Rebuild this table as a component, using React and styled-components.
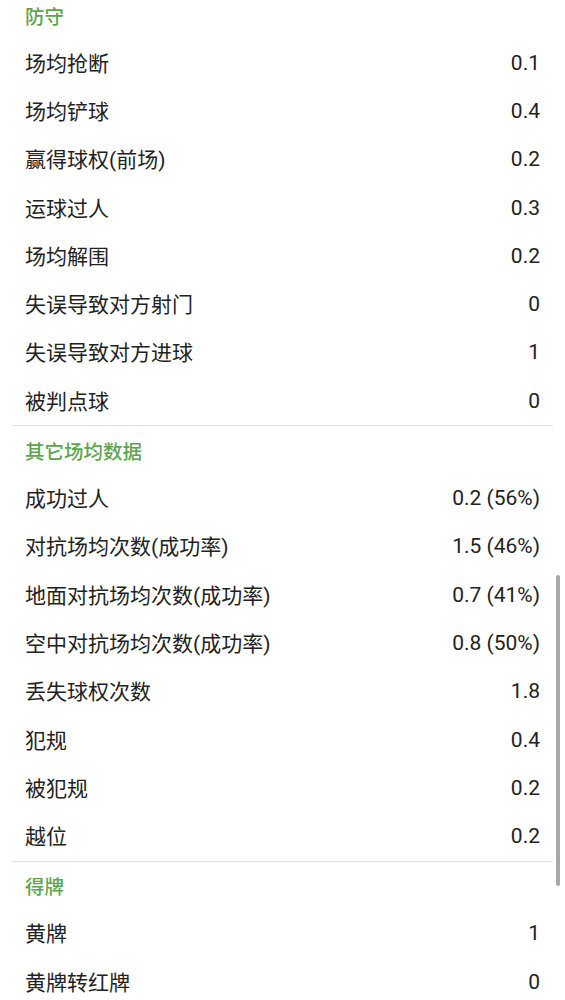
import React from "react";
import styled, { createGlobalStyle } from "styled-components";

const GlobalStyle = createGlobalStyle`
  html, body {
    margin: 0;
    padding: 0;
    background: #ffffff;
    overflow: hidden;
  }
  body {
    font-family: Roboto, "Noto Sans CJK SC", sans-serif;
    -webkit-font-smoothing: antialiased;
  }
`;

const sections = [
  {
    title: "防守",
    rows: [
      ["场均抢断", "0.1"],
      ["场均铲球", "0.4"],
      ["赢得球权(前场)", "0.2"],
      ["运球过人", "0.3"],
      ["场均解围", "0.2"],
      ["失误导致对方射门", "0"],
      ["失误导致对方进球", "1"],
      ["被判点球", "0"],
    ],
  },
  {
    title: "其它场均数据",
    rows: [
      ["成功过人", "0.2 (56%)"],
      ["对抗场均次数(成功率)", "1.5 (46%)"],
      ["地面对抗场均次数(成功率)", "0.7 (41%)"],
      ["空中对抗场均次数(成功率)", "0.8 (50%)"],
      ["丢失球权次数", "1.8"],
      ["犯规", "0.4"],
      ["被犯规", "0.2"],
      ["越位", "0.2"],
    ],
  },
  {
    title: "得牌",
    rows: [
      ["黄牌", "1"],
      ["黄牌转红牌", "0"],
    ],
  },
];

const App = () => {
  return (
    <>
      <GlobalStyle />
      <Page>
        {sections.map((section, i) => (
          <Section key={section.title} $last={i === sections.length - 1}>
            <SectionTitle>{section.title}</SectionTitle>
            {section.rows.map(([label, value]) => (
              <Row key={label}>
                <Label>{label}</Label>
                <Value>{value}</Value>
              </Row>
            ))}
          </Section>
        ))}
      </Page>
      <ScrollThumb />
    </>
  );
};

export default App;

const Page = styled.div`
  margin-top: -9px;
  padding: 0 12px;
`;

const Section = styled.section`
  border-bottom: ${(p) => (p.$last ? "none" : "1px solid #e3e3e3")};
`;

const SectionTitle = styled.h3`
  margin: 0;
  height: 48px;
  display: flex;
  align-items: center;
  padding: 0 13px;
  font-family: Roboto, "Noto Sans CJK SC", sans-serif;
  font-size: 19.5px;
  font-weight: 500;
  color: #5ea44e;
`;

const Row = styled.div`
  height: 48.3px;
  display: flex;
  align-items: center;
  justify-content: space-between;
  padding: 0 13px;
`;

const Label = styled.span`
  font-family: Roboto, "Noto Sans CJK SC", sans-serif;
  font-size: 21px;
  line-height: 1;
  color: #222222;
  margin-top: 2px;
`;

const Value = styled.span`
  font-size: 21px;
  line-height: 1;
  color: #222222;
`;

const ScrollThumb = styled.div`
  position: fixed;
  left: 556px;
  top: 575px;
  width: 4px;
  height: 311px;
  border-radius: 2px;
  background: #a8a8a8;
`;
